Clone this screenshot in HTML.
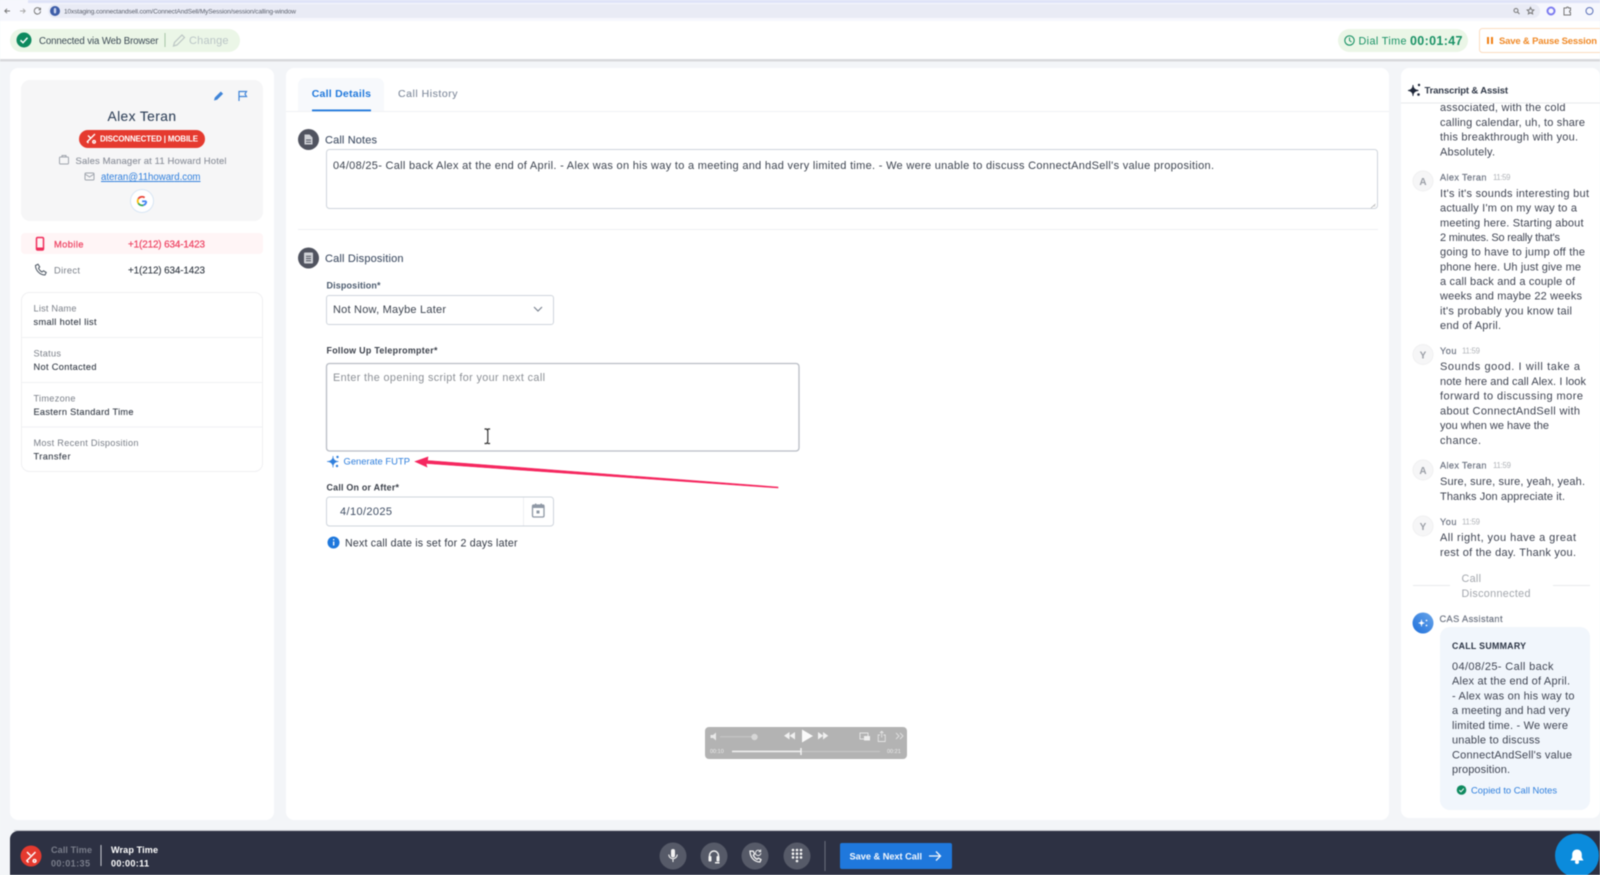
<!DOCTYPE html>
<html lang="en">
<head>
<meta charset="utf-8">
<title>Calling Window</title>
<style>
html,body{margin:0;padding:0;width:1600px;height:875px;overflow:hidden;background:#f3f5f8}
svg{display:block;filter:blur(.5px)}
text{font-family:"Liberation Sans",sans-serif;white-space:pre}
.t{font-size:11px;fill:#3f4452}
.n{font-size:9.2px;fill:#6b7280;stroke:#6b7280;stroke-width:.2px}
.h{font-size:7.800px;fill:#b0b3b8}
.l{font-size:9.200px;fill:#7a7f88}
.v{font-size:9.200px;fill:#333a45;stroke:#333a45;stroke-width:.1px}
</style>
</head>
<body>
<svg width="1600" height="875" viewBox="0 0 1600 875" xmlns="http://www.w3.org/2000/svg">
<rect width="1600" height="875" fill="#f3f5f8"/>

<!-- browser chrome -->
<rect width="1600" height="21" fill="#f6f7fd"/>
<rect width="1600" height="3" fill="#dfe3f8"/>
<rect x="0" y="0" width="28" height="3" fill="#f6f7fd"/>
<rect x="48" y="4" width="1492" height="14" rx="7" fill="#e9ebf5"/>
<g fill="none" stroke="#777" stroke-width="1">
<path d="M10 11H5M7 8.800L4.800 11L7 13.200"/>
<path d="M20 11h5M23 8.800L25.200 11L23 13.200" stroke="#aaa"/>
<path d="M40 9a3.200 3.200 0 1 0 .6 2.200M40.500 7.800v2h-2"/>
<circle cx="1516" cy="10.500" r="2"/><path d="M1517.500 12l2 2"/>
<path d="M1530.500 7.500l1 2.200 2.300.3-1.700 1.600.5 2.300-2.100-1.200-2.100 1.200.5-2.300-1.700-1.600 2.300-.3z"/>
<path d="M1564 8h2.500a1 1 0 0 1 2 0h2v2.500a1 1 0 0 0 0 2V15h-6.500z"/>
<circle cx="1589.500" cy="11" r="3.500" stroke="#5b70b8"/>
</g>
<circle cx="55" cy="11" r="5" fill="#3d5da8"/><rect x="53.800" y="8" width="2.400" height="5.500" rx="1.200" fill="#c8d2ee"/>
<text x="64" y="13.300" font-size="6.500" fill="#5a5f6b" textLength="232">10xstaging.connectandsell.com/ConnectAndSell/MySession/session/calling-window</text>
<circle cx="1551" cy="11" r="3.500" fill="none" stroke="#7d7cf0" stroke-width="2"/>

<!-- header -->
<rect y="21" width="1600" height="39" fill="#fff"/>
<rect y="59" width="1600" height="2.500" fill="#d8d9dc"/>
<rect x="10" y="29" width="230" height="23" rx="11.500" fill="#ebf6e7"/>
<circle cx="24" cy="40" r="7.500" fill="#0e8a5f"/>
<path d="M20.500 40.200l2.500 2.500 4.500-5" fill="none" stroke="#fff" stroke-width="1.500"/>
<text x="39" y="43.800" font-size="9.700" fill="#3c4a55" textLength="119.500">Connected via Web Browser</text>
<rect x="164.500" y="33" width="1" height="14" fill="#a9c5a8"/>
<path d="M173.500 46l1-3.500 7.500-7.500 2.500 2.500-7.500 7.500z" fill="none" stroke="#bcc6c4" stroke-width="1.200"/>
<text x="189" y="44" font-size="11" fill="#bac5c6" textLength="39.500">Change</text>

<rect x="1338" y="29" width="130" height="23" rx="11.500" fill="#ebf6e7"/>
<circle cx="1349.500" cy="40.500" r="4.700" fill="none" stroke="#1a9266" stroke-width="1.100"/>
<path d="M1349.500 37.500v3l2 1.500" fill="none" stroke="#1a9266" stroke-width="1"/>
<text x="1358.500" y="44.300" font-size="10.800" fill="#1a9266" textLength="48">Dial Time</text>
<text x="1410" y="45" font-size="12.500" font-weight="700" fill="#1a9266" textLength="52.500">00:01:47</text>
<rect x="1479.500" y="28.500" width="130" height="24" rx="3" fill="#fff" stroke="#fbdcc0"/>
<rect x="1487" y="37" width="2" height="7" fill="#f08015"/><rect x="1491" y="37" width="2" height="7" fill="#f08015"/>
<text x="1499" y="44" font-size="9.500" font-weight="700" fill="#f08a28" textLength="98">Save &amp; Pause Session</text>

<!-- left card -->
<rect x="10" y="68" width="264" height="752" rx="8" fill="#fff"/>
<rect x="21" y="80" width="242" height="141" rx="9" fill="#f6f6f7"/>
<path d="M214 100.500l.8-3 6-6 2.300 2.300-6 6z" fill="#3f84d8"/>
<path d="M239 101v-9.500h7.500l-1.500 2.500 1.500 2.500h-7.500" fill="none" stroke="#3f84d8" stroke-width="1.200"/>
<text x="107.500" y="121" font-size="13.800" fill="#32435b" stroke="#32435b" stroke-width=".1" textLength="68.500">Alex Teran</text>
<rect x="79" y="130" width="126" height="18" rx="9" fill="#e53a2f"/>
<path d="M87 142l8-8M88 135.500l3 3M94 140.500a1.300 1.300 0 1 0 .1 0M87 141.500l1.500 1.500" fill="none" stroke="#fff" stroke-width="1.400"/>
<text x="100" y="141.300" font-size="7.900" font-weight="700" fill="#fff" textLength="98">DISCONNECTED | MOBILE</text>
<rect x="59.500" y="157" width="9" height="7" rx="1" fill="none" stroke="#a0a5ad"/>
<path d="M62 157v-1.500h4v1.500" fill="none" stroke="#a0a5ad"/>
<text x="75.500" y="163.800" font-size="9.500" fill="#8b909a" stroke="#8b909a" stroke-width=".1" textLength="151">Sales Manager at 11 Howard Hotel</text>
<rect x="85" y="173" width="9" height="7" rx="1" fill="none" stroke="#a0a5ad"/>
<path d="M85 174l4.500 3 4.500-3" fill="none" stroke="#a0a5ad"/>
<text x="101" y="180" font-size="9.700" fill="#2f7fdd" text-decoration="underline" textLength="99.500">ateran@11howard.com</text>
<circle cx="142" cy="201" r="11.500" fill="#fff" stroke="#d8e6f5"/>
<path d="M146.300 201.300h-4.200" fill="none" stroke="#4285f4" stroke-width="1.800"/>
<path d="M146.300 201.300a4.400 4.400 0 0 1-3 3.900" fill="none" stroke="#4285f4" stroke-width="1.800"/>
<path d="M143.300 205.200a4.400 4.400 0 0 1-5-2" fill="none" stroke="#34a853" stroke-width="1.800"/>
<path d="M138.300 203.200a4.400 4.400 0 0 1 0-4.400" fill="none" stroke="#fbbc05" stroke-width="1.800"/>
<path d="M138.300 198.800a4.400 4.400 0 0 1 6.300-1.200" fill="none" stroke="#ea4335" stroke-width="1.800"/>

<rect x="21" y="233" width="242" height="21" rx="4" fill="#fff5f6"/>
<rect x="36.500" y="237.500" width="7" height="12.500" rx="1.300" fill="none" stroke="#f02d5b" stroke-width="1.500"/>
<rect x="37" y="247.500" width="6" height="2.500" fill="#f02d5b"/>
<text x="54" y="247.500" font-size="9.400" fill="#ee4766" stroke="#ee4766" stroke-width=".25" textLength="29.500">Mobile</text>
<text x="128" y="247.600" font-size="9.900" fill="#ee4766" stroke="#ee4766" stroke-width=".25" textLength="77">+1(212) 634-1423</text>
<path d="M35.500 265.500c0 5 4.500 9.500 9.500 9.500l1.200-2.500-2.700-1.700-1.500 1.200c-1.500-.8-2.800-2.200-3.500-3.700l1.200-1.400-1.700-2.700z" fill="none" stroke="#56606c" stroke-width="1.100"/>
<text x="54" y="273.500" font-size="9.400" fill="#7a7f88" textLength="26">Direct</text>
<text x="128" y="273.600" font-size="9.900" fill="#2f3640" stroke="#2f3640" stroke-width=".1" textLength="77">+1(212) 634-1423</text>

<rect x="21.500" y="292.500" width="241" height="179" rx="8" fill="#fff" stroke="#f0f0f2"/>
<path d="M22 337.500h240M22 382.500h240M22 427h240" stroke="#f0f1f3"/>
<text class="l" x="33.500" y="311.500" textLength="43">List Name</text>
<text class="v" x="33.500" y="324.800" textLength="63">small hotel list</text>
<text class="l" x="33.500" y="356.300" textLength="27.500">Status</text>
<text class="v" x="33.500" y="369.800" textLength="63">Not Contacted</text>
<text class="l" x="33.500" y="401.300" textLength="42">Timezone</text>
<text class="v" x="33.500" y="414.800" textLength="100">Eastern Standard Time</text>
<text class="l" x="33.500" y="446.200" textLength="105">Most Recent Disposition</text>
<text class="v" x="33.500" y="459.300" textLength="37">Transfer</text>

<!-- center card -->
<rect x="286" y="68" width="1103" height="752" rx="8" fill="#fff"/>
<path d="M298 111V85a7 7 0 0 1 7-7h72a7 7 0 0 1 7 7v26z" fill="#f7f9fc"/>
<rect x="286" y="111" width="1103" height="1" fill="#f0f1f4"/>
<text x="311.700" y="97" font-size="10.500" font-weight="700" fill="#1f78dc" textLength="59.300">Call Details</text>
<rect x="312" y="109.500" width="59" height="1.800" fill="#1f78dc"/>
<text x="398" y="97" font-size="10.500" fill="#808b9c" stroke="#808b9c" stroke-width=".1" textLength="59.500">Call History</text>

<circle cx="308.500" cy="139.500" r="10.500" fill="#50535f"/>
<path d="M304.500 134.500h5l3 3v7h-8z" fill="#cfd1d6"/>
<rect x="306" y="139.500" width="5" height="1" fill="#50535f"/><rect x="306" y="141.800" width="5" height="1" fill="#50535f"/>
<text x="325" y="143.300" font-size="11" fill="#3f4d63" stroke="#3f4d63" stroke-width=".08" textLength="52">Call Notes</text>
<rect x="326.500" y="149.500" width="1051" height="59" rx="3" fill="#fff" stroke="#cfd5dc"/>
<path d="M1375.500 206l-2.500 0M1375.500 204l-4.500 4" stroke="#aaa" stroke-width=".6"/>
<text x="333" y="169" font-size="11" fill="#3d4450" textLength="881">04/08/25- Call back Alex at the end of April. - Alex was on his way to a meeting and had very limited time. - We were unable to discuss ConnectAndSell's value proposition.</text>
<rect x="298" y="229" width="1080" height="1" fill="#eef0f3"/>

<circle cx="308.500" cy="258" r="10.500" fill="#50535f"/>
<rect x="304" y="252.500" width="9" height="11" rx="1" fill="#cfd1d6"/>
<rect x="306" y="255.800" width="5" height="1" fill="#50535f"/><rect x="306" y="258" width="5" height="1" fill="#50535f"/><rect x="306" y="260.200" width="5" height="1" fill="#50535f"/>
<text x="325" y="262" font-size="11" fill="#3f4d63" stroke="#3f4d63" stroke-width=".08" textLength="78.500">Call Disposition</text>
<text x="326.500" y="288.700" font-size="9" font-weight="700" fill="#4b5a6e" textLength="54">Disposition*</text>
<rect x="326.500" y="295.500" width="227" height="29" rx="2.500" fill="#fff" stroke="#cfd5dc"/>
<text x="333" y="313" font-size="11" fill="#3d4450" textLength="113">Not Now, Maybe Later</text>
<path d="M534 307l4 4 4-4" fill="none" stroke="#7c8592" stroke-width="1.200"/>

<text x="326.500" y="353.500" font-size="8.900" font-weight="700" fill="#3a3f49" textLength="111">Follow Up Teleprompter*</text>
<rect x="326.500" y="363.500" width="472.500" height="87.500" rx="3" fill="#fff" stroke="#b9bdc5" stroke-width="1.300"/>
<text x="333" y="381" font-size="10.800" fill="#8c9096" textLength="212">Enter the opening script for your next call</text>
<path d="M484.500 429h2l.8 1 .8-1h2M487.800 430v12M484.500 443.500h2l.8-1 .8 1h2" fill="none" stroke="#333" stroke-width="1.200"/>

<path d="M333 456Q333 461 338.500 461.500Q333 462 333 467.500Q333 462 327 461.500Q333 461 333 456Z" fill="#2f7fdd" stroke="#2f7fdd" stroke-width=".4"/>
<circle cx="337.500" cy="457" r="1.200" fill="#2f7fdd"/><circle cx="337" cy="466" r="1.200" fill="#2f7fdd"/>
<text x="343.500" y="464.700" font-size="9.400" fill="#2f7fdd" textLength="66.500">Generate FUTP</text>
<path d="M778 488L426 463.500L427 467L415 461.500L428 457L427.500 460.500L778 487Z" fill="#f5275f" stroke="#f5275f" stroke-width=".6"/>
<text x="326.500" y="490.500" font-size="8.900" font-weight="700" fill="#3a3f49" textLength="72.500">Call On or After*</text>
<rect x="326.500" y="497" width="227" height="29" rx="3" fill="#fff" stroke="#cfd5dc"/>
<rect x="523" y="497.500" width="1" height="28" fill="#eef0f3"/>
<text x="340" y="515.200" font-size="11" fill="#3f4d63" textLength="52">4/10/2025</text>
<rect x="532.500" y="505" width="11.500" height="12" rx="1.200" fill="none" stroke="#8f98a5" stroke-width="1.300"/>
<rect x="532.500" y="505" width="11.500" height="3" fill="#8f98a5"/>
<rect x="535" y="503.500" width="1.300" height="2.500" fill="#8f98a5"/><rect x="540.500" y="503.500" width="1.300" height="2.500" fill="#8f98a5"/>
<rect x="536.500" y="510.500" width="3" height="3" fill="#8f98a5"/>
<circle cx="333.500" cy="542.500" r="6" fill="#1f78dc"/>
<rect x="333" y="541.500" width="1.300" height="4" fill="#fff"/><rect x="333" y="539" width="1.300" height="1.300" fill="#fff"/>
<text x="345" y="546.300" font-size="10.600" fill="#343a46" textLength="172.500">Next call date is set for 2 days later</text>

<!-- player -->
<rect x="705" y="727" width="202" height="32" rx="4" fill="#b3b3b3"/>
<path d="M710.500 735h2.500l3-2.500v8l-3-2.500h-2.500z" fill="#e8e8e8"/>
<rect x="720" y="736.300" width="33" height="1" fill="#c8c8c8"/>
<circle cx="754.500" cy="737" r="3.200" fill="#d6d6d6"/>
<path d="M789.500 732v7.500l-5.500-3.750zM795 732v7.500l-5.500-3.750z" fill="#f0f0f0"/>
<path d="M802 731v13l11-6.500z" fill="#fafafa" transform="translate(0 -1.500)"/>
<path d="M818 732v7.500l5.200-3.750zM823 732v7.500l5.200-3.750z" fill="#f0f0f0"/>
<rect x="860" y="733" width="8" height="6" fill="none" stroke="#e4e4e4"/><rect x="864" y="736" width="6" height="4.500" fill="#eee"/>
<path d="M880 735h-1.800v6.500h7V735h-1.800M881.700 737.500v-6M880 733l1.700-1.700 1.700 1.700" fill="none" stroke="#e4e4e4" stroke-width=".9"/>
<path d="M896 733l3 3-3 3M900 733l3 3-3 3" fill="none" stroke="#dedede"/>
<text x="710" y="753" font-size="5.500" fill="#ececec">00:10</text>
<rect x="732" y="751" width="148" height="1" fill="#c8c8c8"/>
<rect x="732" y="750.700" width="69" height="1.500" fill="#f2f2f2"/>
<rect x="800.300" y="748" width="1.400" height="7" fill="#f5f5f5"/>
<text x="887" y="753" font-size="5.500" fill="#ececec">00:21</text>

<!-- right card -->
<rect x="1401" y="68" width="199" height="750" rx="8" fill="#fff"/>
<path d="M1413 85Q1413 90 1408 90.500Q1413 91 1413 96Q1413 91 1418.500 90.500Q1413 90 1413 85Z" fill="#20283a" stroke="#20283a" stroke-width=".8"/>
<circle cx="1419" cy="85" r="1.200" fill="#20283a"/><circle cx="1418.500" cy="94.500" r="1.300" fill="#20283a"/>
<text x="1424.500" y="93.500" font-size="9.500" font-weight="700" fill="#2f3746" textLength="83.500">Transcript &amp; Assist</text>

<text class="t" x="1440" y="111" textLength="125.500">associated, with the cold</text>
<text class="t" x="1440" y="126" textLength="145">calling calendar, uh, to share</text>
<text class="t" x="1440" y="140.500" textLength="138">this breakthrough with you.</text>
<text class="t" x="1440" y="155.300" textLength="55">Absolutely.</text>
<rect x="1401" y="102.500" width="199" height="1" fill="#e8e9ec"/>

<circle cx="1423" cy="181" r="10" fill="#f6f6f7" stroke="#f0f0f1"/>
<text x="1423" y="185" font-size="10" font-weight="700" fill="#9a9ea6" text-anchor="middle">A</text>
<text class="n" x="1440" y="180.500" textLength="46.500">Alex Teran</text>
<text class="h" x="1493" y="180" textLength="17.500">11:59</text>
<text class="t" x="1440" y="197" textLength="149">It's it's sounds interesting but</text>
<text class="t" x="1440" y="211.500" textLength="137">actually I'm on my way to a</text>
<text class="t" x="1440" y="226.300" textLength="143.500">meeting here. Starting about</text>
<text class="t" x="1440" y="241" textLength="120">2 minutes. So really that's</text>
<text class="t" x="1440" y="255.500" textLength="145">going to have to jump off the</text>
<text class="t" x="1440" y="270.300" textLength="141">phone here. Uh just give me</text>
<text class="t" x="1440" y="285" textLength="135">a call back and a couple of</text>
<text class="t" x="1440" y="299.700" textLength="142">weeks and maybe 22 weeks</text>
<text class="t" x="1440" y="314.300" textLength="132">it's probably you know tail</text>
<text class="t" x="1440" y="329" textLength="61">end of April.</text>

<circle cx="1423" cy="354.500" r="10" fill="#f6f6f7" stroke="#f0f0f1"/>
<text x="1423" y="358.500" font-size="10" font-weight="700" fill="#9a9ea6" text-anchor="middle">Y</text>
<text class="n" x="1440" y="354" textLength="16.500">You</text>
<text class="h" x="1462" y="353.500" textLength="18">11:59</text>
<text class="t" x="1440" y="370" textLength="140">Sounds good. I will take a</text>
<text class="t" x="1440" y="385" textLength="146">note here and call Alex. I look</text>
<text class="t" x="1440" y="399.700" textLength="143">forward to discussing more</text>
<text class="t" x="1440" y="414.300" textLength="140">about ConnectAndSell with</text>
<text class="t" x="1440" y="429" textLength="109">you when we have the</text>
<text class="t" x="1440" y="444" textLength="41">chance.</text>

<circle cx="1423" cy="470" r="10" fill="#f6f6f7" stroke="#f0f0f1"/>
<text x="1423" y="474" font-size="10" font-weight="700" fill="#9a9ea6" text-anchor="middle">A</text>
<text class="n" x="1440" y="468.500" textLength="46.500">Alex Teran</text>
<text class="h" x="1493" y="468" textLength="18">11:59</text>
<text class="t" x="1440" y="485" textLength="145">Sure, sure, sure, yeah, yeah.</text>
<text class="t" x="1440" y="500" textLength="125">Thanks Jon appreciate it.</text>

<circle cx="1423" cy="526" r="10" fill="#f6f6f7" stroke="#f0f0f1"/>
<text x="1423" y="530" font-size="10" font-weight="700" fill="#9a9ea6" text-anchor="middle">Y</text>
<text class="n" x="1440" y="525" textLength="16.500">You</text>
<text class="h" x="1462" y="524.500" textLength="18">11:59</text>
<text class="t" x="1440" y="541" textLength="136">All right, you have a great</text>
<text class="t" x="1440" y="556" textLength="136">rest of the day. Thank you.</text>

<rect x="1413" y="585" width="37" height="1" fill="#e8eaed"/>
<rect x="1553" y="585" width="37" height="1" fill="#e8eaed"/>
<text x="1461.500" y="582" font-size="10.800" fill="#a3a7ad" textLength="19.500">Call</text>
<text x="1461.500" y="597" font-size="10.800" fill="#a3a7ad" textLength="69">Disconnected</text>

<defs><linearGradient id="g" x1="0" y1="1" x2="1" y2="0"><stop offset="0" stop-color="#1d6fdb"/><stop offset="1" stop-color="#6aa6ea"/></linearGradient></defs>
<circle cx="1423" cy="623" r="10.500" fill="url(#g)"/>
<path d="M1421.500 619.500Q1421.500 622.500 1418.500 623Q1421.500 623.500 1421.500 626.500Q1421.500 623.500 1424.500 623Q1421.500 622.500 1421.500 619.500Z" fill="#fff" stroke="#fff" stroke-width=".4"/>
<circle cx="1426.500" cy="620.500" r=".9" fill="#fff"/><circle cx="1426.500" cy="625.500" r=".9" fill="#fff"/>
<text class="n" x="1439.500" y="622" textLength="63">CAS Assistant</text>
<rect x="1440" y="627" width="150" height="183" rx="10" fill="#f1f6fc"/>
<text x="1452" y="649" font-size="8.800" font-weight="700" fill="#2b3444" textLength="74">CALL SUMMARY</text>
<text class="t" x="1452" y="670" textLength="101.500">04/08/25- Call back</text>
<text class="t" x="1452" y="684.500" textLength="118">Alex at the end of April.</text>
<text class="t" x="1452" y="699.300" textLength="122.500">- Alex was on his way to</text>
<text class="t" x="1452" y="714" textLength="118">a meeting and had very</text>
<text class="t" x="1452" y="729" textLength="116">limited time. - We were</text>
<text class="t" x="1452" y="743.500" textLength="88">unable to discuss</text>
<text class="t" x="1452" y="758.300" textLength="120">ConnectAndSell's value</text>
<text class="t" x="1452" y="773" textLength="58">proposition.</text>
<circle cx="1461.500" cy="790" r="4.800" fill="#0e8a5f"/>
<path d="M1459.300 790.200l1.600 1.600 2.900-3.200" fill="none" stroke="#fff" stroke-width="1"/>
<text x="1471" y="793.500" font-size="9.400" fill="#2f7fdd" textLength="86">Copied to Call Notes</text>

<!-- bottom bar -->
<path d="M10 875V839a8 8 0 0 1 8-8H1600V875Z" fill="#2d3143"/>
<rect x="14" y="830" width="1586" height="1" fill="#9a9ca5" opacity=".5"/>
<circle cx="31" cy="856" r="10.500" fill="#e53a2f"/>
<path d="M26.500 861l9-9M27 852l3.500 3.500M34.500 859.500a1.400 1.400 0 1 0 .1 0M26.500 860.500l2 2" fill="none" stroke="#fff" stroke-width="1.500"/>
<text x="51" y="853" font-size="9.100" font-weight="700" fill="#797d8a" textLength="41">Call Time</text>
<text x="51" y="866.500" font-size="9.100" font-weight="700" fill="#797d8a" textLength="39">00:01:35</text>
<rect x="100.500" y="845" width="1" height="21" fill="#c8cad0"/>
<text x="111" y="853" font-size="9.100" font-weight="700" fill="#fff" textLength="47">Wrap Time</text>
<text x="111" y="866.500" font-size="9.100" font-weight="700" fill="#fff" textLength="38">00:00:11</text>

<circle cx="673" cy="856" r="13.500" fill="#565a68"/>
<circle cx="714" cy="856" r="13.500" fill="#565a68"/>
<circle cx="755" cy="856" r="13.500" fill="#565a68"/>
<circle cx="797" cy="856" r="13.500" fill="#565a68"/>
<rect x="671" y="849" width="4" height="8.500" rx="2" fill="#f2f2f2"/>
<path d="M668.800 854.500a4.200 4.200 0 0 0 8.400 0M673 859v3" fill="none" stroke="#f2f2f2" stroke-width="1.100"/>
<path d="M709.500 860v-4.500a4.500 4.500 0 0 1 9 0v4.500" fill="none" stroke="#f2f2f2" stroke-width="1.400"/>
<rect x="708.500" y="856" width="3" height="5.500" rx="1" fill="#f2f2f2"/><rect x="716.500" y="856" width="3" height="5.500" rx="1" fill="#f2f2f2"/>
<rect x="715" y="862" width="4.500" height="1.500" fill="#f2f2f2"/>
<path d="M750 851c0 6 4 11 10 11l1-2.500-2.600-1.400-1.400 1.200c-1.700-.9-3-2.400-3.700-4l1.300-1.300-1.500-2.900z" fill="none" stroke="#f2f2f2" stroke-width="1.300"/>
<path d="M760.500 851.500a2.700 2.700 0 1 0 .4 1.500M760.700 849.500v2.200h-2.200" fill="none" stroke="#f2f2f2" stroke-width=".9"/>
<g fill="#f6f6f6">
<circle cx="793" cy="850" r="1.300"/><circle cx="797" cy="850" r="1.300"/><circle cx="801" cy="850" r="1.300"/>
<circle cx="793" cy="853.700" r="1.300"/><circle cx="797" cy="853.700" r="1.300"/><circle cx="801" cy="853.700" r="1.300"/>
<circle cx="793" cy="857.400" r="1.300"/><circle cx="797" cy="857.400" r="1.300"/><circle cx="801" cy="857.400" r="1.300"/>
<circle cx="797" cy="861" r="1.300"/>
</g>
<rect x="824.500" y="841" width="1" height="30" fill="#6a6e7b"/>
<rect x="840" y="843" width="112" height="26" rx="2" fill="#1f78dc"/>
<text x="849.500" y="859.500" font-size="9.200" font-weight="700" fill="#f4f8fd" textLength="72.500">Save &amp; Next Call</text>
<path d="M929 856h11.500M936 851.500l4.500 4.500-4.500 4.500" fill="none" stroke="#f4f8fd" stroke-width="1.300"/>

<circle cx="1577" cy="855.500" r="22" fill="#0b8bdc"/>
<path d="M1577 849.500c-3 0-4.800 2.300-4.800 5v3l-1.700 3h13l-1.700-3v-3c0-2.700-1.800-5-4.800-5z" fill="#fff"/>
<circle cx="1577" cy="862" r="2" fill="#fff"/>
</svg>
</body>
</html>
